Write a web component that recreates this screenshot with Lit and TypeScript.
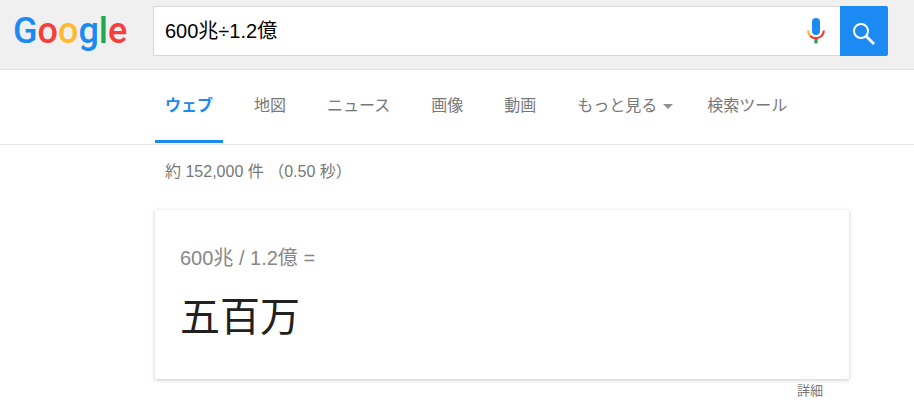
import { LitElement, html, css, svg } from "lit";
import { customElement, state } from "lit/decorators.js";
import { classMap } from "lit/directives/class-map.js";

const micIcon = svg`
  <svg viewBox="0 0 18 26" width="18" height="26" aria-hidden="true">
    <rect x="5" y="0" width="8" height="17" rx="4" fill="#1b8af2"/>
    <rect x="7.4" y="20" width="3.2" height="5.4" fill="#1fa855"/>
    <path d="M1.2 12.5 C1.2 15 2 17 3.6 18.4" fill="none" stroke="#fbb829" stroke-width="2.2"/>
    <path d="M3.2 18 C4.8 19.6 6.8 20.2 9 20.2 C13.4 20.2 16.8 17 16.8 12.5" fill="none" stroke="#f43b36" stroke-width="2.2"/>
  </svg>`;

const searchIcon = svg`
  <svg viewBox="0 0 22 22" width="22" height="22" aria-hidden="true">
    <circle cx="8" cy="8" r="7" fill="none" stroke="#fff" stroke-width="2"/>
    <path d="M13 13 L21 21" fill="none" stroke="#fff" stroke-width="2.8"/>
  </svg>`;

@customElement("app-root")
export class AppRoot extends LitElement {
  static styles = css`
    :host {
      display: block;
      min-height: 100vh;
      background: #fff;
      color: #777;
      font: 16px/24px "Liberation Sans", "Noto Sans CJK JP", sans-serif;
    }
    a {
      color: inherit;
      text-decoration: none;
    }
    .header {
      display: grid;
      grid-template-columns: 140px minmax(0, 1fr);
      align-items: center;
      padding: 6px 26px 13px 13px;
      background: #f0f0f0;
      border-bottom: 1px solid #e2e2e2;
    }
    .logo {
      font: 36px/50px Roboto, sans-serif;
      font-weight: 500;
      white-space: nowrap;
    }
    .blue { color: #1b8af2; }
    .red { color: #f63e3a; }
    .yellow { color: #fdba2f; }
    .green { color: #1fa855; }
    .search {
      display: flex;
      height: 50px;
    }
    .box {
      flex: 1;
      display: flex;
      align-items: center;
      min-width: 0;
      background: #fff;
      border: 1px solid #d8d8d8;
      border-right: 0;
    }
    .query {
      flex: 1;
      min-width: 0;
      height: 30px;
      padding: 0 11px;
      border: 0;
      outline: 0;
      background: none;
      color: #000;
      font: 20px/30px "Liberation Sans", "Noto Sans CJK JP", sans-serif;
    }
    button {
      display: grid;
      place-items: center;
      padding: 0;
      border: 0;
      background: none;
      cursor: pointer;
    }
    .mic {
      width: 48px;
      height: 48px;
    }
    .submit {
      width: 48px;
      height: 50px;
      padding-top: 6px;
      border-radius: 0 2px 2px 0;
      background: #1b8af2;
    }
    .tabs {
      display: flex;
      gap: 21px;
      padding: 0 16px 1px 155px;
      border-bottom: 1px solid #e8e8e8;
      white-space: nowrap;
    }
    .tab {
      display: flex;
      align-items: center;
      gap: 6px;
      padding: 24px 10px 22px;
      border-bottom: 3px solid transparent;
    }
    .menu {
      padding-right: 3px;
    }
    .active {
      color: #1b8af2;
      font-weight: 700;
      border-color: #1b8af2;
    }
    .caret {
      border: 5px solid transparent;
      border-top-color: #909090;
      border-bottom: 0;
    }
    .stats {
      margin: 0;
      padding: 15px 16px 26px 165px;
    }
    .answer {
      max-width: 694px;
      margin: 0 16px 0 155px;
    }
    .card {
      padding: 33px 25px 32px;
      background: #fff;
      box-shadow: 0 1px 4px rgba(0, 0, 0, 0.22);
    }
    .equation {
      color: #878787;
      font-size: 20px;
      line-height: 30px;
    }
    .result {
      padding-top: 14px;
      color: #212121;
      font-size: 40px;
      line-height: 60px;
    }
    .more {
      padding-right: 26px;
      text-align: right;
      font-size: 13px;
    }
  `;

  @state() private active = "ウェブ";

  private tabs = [
    { name: "ウェブ" },
    { name: "地図" },
    { name: "ニュース" },
    { name: "画像" },
    { name: "動画" },
    { name: "もっと見る", menu: true },
    { name: "検索ツール" },
  ];

  private select(e: Event, name: string) {
    e.preventDefault();
    this.active = name;
  }

  render() {
    return html`
      <header class="header">
        <a class="logo" href="#" aria-label="Google"><span class="blue">G</span><span class="red">o</span><span class="yellow">o</span><span class="blue">g</span><span class="green">l</span><span class="red">e</span></a>
        <form class="search" role="search" @submit=${(e: Event) => e.preventDefault()}>
          <div class="box">
            <input class="query" type="text" aria-label="検索" .value=${"600兆÷1.2億"} />
            <button class="mic" type="button" aria-label="音声検索">${micIcon}</button>
          </div>
          <button class="submit" type="submit" aria-label="検索">${searchIcon}</button>
        </form>
      </header>
      <nav class="tabs">
        ${this.tabs.map(
          ({ name, menu = false }) => html`<a
            href="#"
            class=${classMap({ tab: true, menu, active: name === this.active })}
            @click=${(e: Event) => this.select(e, name)}
            >${name}${menu ? html`<span class="caret"></span>` : ""}</a>`
        )}
      </nav>
      <main>
        <p class="stats">約 152,000 件 （0.50 秒）</p>
        <section class="answer">
          <div class="card">
            <div class="equation">600兆 / 1.2億 =</div>
            <div class="result">五百万</div>
          </div>
          <div class="more"><a href="#">詳細</a></div>
        </section>
      </main>
    `;
  }
}
